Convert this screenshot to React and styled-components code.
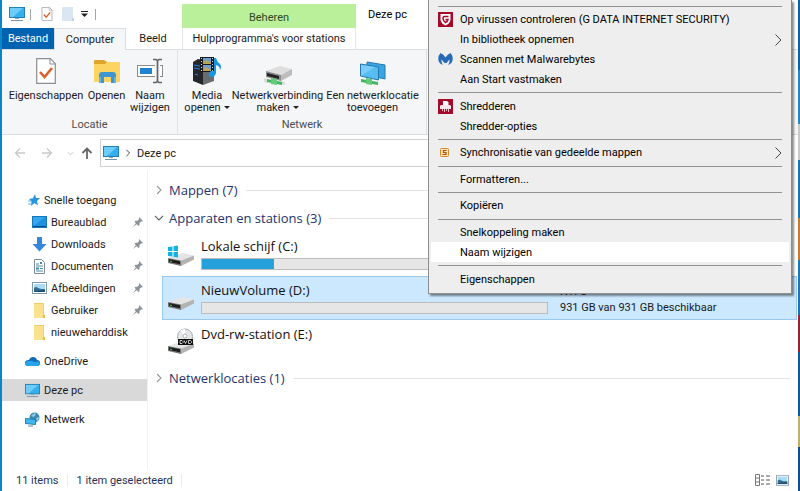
import React from "react";
import styled, { createGlobalStyle } from "styled-components";

const GlobalStyle = createGlobalStyle`
  * {
    box-sizing: border-box;
  }

  body {
    margin: 0;
    overflow: hidden;
    font-family: Roboto, "Open Sans", sans-serif;
    font-size: 11px;
    line-height: 13px;
    color: #1a1a1a;
  }

  button {
    font: inherit;
    color: inherit;
    background: none;
    border: 0;
    padding: 0;
    margin: 0;
  }

  svg {
    display: block;
    flex: none;
  }
`;

const Desktop = styled.div`
  position: relative;
  height: 100vh;
  padding-right: 2px;
  border-left: 2px solid #0787c9;
  background: linear-gradient(
    to bottom,
    #0d62a8 0 70px,
    #2487c4 70px 124px,
    #c9c9c9 124px 160px,
    #1673b8 160px 218px,
    #c57b32 218px 260px,
    #1c75b5 260px 315px,
    #96252a 315px 352px,
    #0e599c 352px 416px,
    #bfae6c 416px 447px,
    #0e4f93 447px
  );
`;

const Window = styled.div`
  height: 100%;
  display: flex;
  flex-direction: column;
  background: #fff;
`;

/* title bar and tabs */

const Header = styled.header`
  display: grid;
  grid-template-columns: 180px 174px 1fr;
  grid-template-rows: 28px 21px;
  border-bottom: 1px solid #dcddde;
`;

const QuickAccess = styled.div`
  display: flex;
  align-items: center;
  padding-left: 7px;
`;

const QuickButton = styled.button`
  display: flex;
  justify-content: center;
  width: ${(props) => props.$width || 21}px;
`;

const QuickDivider = styled.span`
  width: 1px;
  height: 11px;
  margin: 0 5px;
  background: #a5a5a5;
`;

const ContextTitle = styled.div`
  margin-top: 4px;
  padding-top: 7px;
  text-align: center;
  background: #bbf09a;
  color: #2c4a22;
`;

const WindowTitle = styled.div`
  padding: 8px 12px;
  color: #000;
`;

const TabList = styled.div`
  display: flex;
`;

const Tab = styled.button`
  width: ${(props) => props.$width}px;
  height: 21px;
  text-align: center;
`;

const FileTab = styled(Tab)`
  color: #fff;
  background: #0063b1;
`;

const ActiveTab = styled(Tab)`
  height: 22px;
  background: #f5f6f7;
  border: 1px solid #dcddde;
  border-bottom: 0;
`;

const ToolTab = styled(Tab)`
  width: 100%;
  border: 1px solid #e6e6e6;
  border-width: 0 1px;
`;

/* ribbon */

const Ribbon = styled.section`
  display: flex;
  height: 85px;
  line-height: 12px;
  background: #f5f6f7;
  border-bottom: 1px solid #dadbdc;
`;

const RibbonGroup = styled.div`
  display: flex;
  flex-direction: column;
  justify-content: space-between;
  padding: 7px 5px 3px;
  border-right: 1px solid #e1e2e3;
`;

const RibbonButtons = styled.div`
  display: flex;
`;

const RibbonButton = styled.button`
  width: ${(props) => props.$width}px;
  display: flex;
  flex-direction: column;
  align-items: center;
  gap: 5px;
  white-space: nowrap;
`;

const RibbonIcon = styled.span`
  display: flex;
  align-items: center;
  height: 28px;
`;

const GroupLabel = styled.div`
  text-align: center;
  color: #4d4d4d;
`;

const Caret = styled.span`
  display: inline-block;
  margin-left: 3px;
  vertical-align: 2px;
  border: 3px solid transparent;
  border-top-color: #222;
  border-bottom: 0;
`;

/* address bar */

const AddressBar = styled.div`
  display: flex;
  align-items: center;
  height: 36px;
  padding: 0 8px 0 11px;
`;

const NavButton = styled.button`
  width: ${(props) => props.$width || 27}px;
  display: flex;
  justify-content: center;
`;

const Address = styled.div`
  flex: 1;
  display: flex;
  align-items: center;
  gap: 5px;
  height: 28px;
  padding-left: 2px;
  border: 1px solid #d0d0d0;
`;

/* body */

const Body = styled.div`
  flex: 1;
  display: flex;
  min-height: 0;
`;

const Sidebar = styled.nav`
  width: 146px;
  padding-top: 18px;
  border-right: 1px solid #f1f1f1;
`;

const NavGroup = styled.div`
  margin-bottom: 7px;
`;

const NavItem = styled.a`
  display: flex;
  align-items: center;
  gap: 4px;
  height: 22px;
  padding-left: ${(props) => (props.$nested ? 30 : 23)}px;
  padding-right: 4px;
  color: inherit;
  text-decoration: none;
  background: ${(props) => (props.$active ? "#d9d9d9" : "none")};

  span {
    flex: 1;
    white-space: nowrap;
  }
`;

const Content = styled.main`
  flex: 1;
  padding: 5px 8px 0 6px;
`;

const SectionHead = styled.h2`
  display: flex;
  align-items: center;
  gap: 5px;
  height: 28px;
  margin: 0;
  font-family: "Open Sans", sans-serif;
  font-size: 13px;
  line-height: 18px;
  font-weight: 400;
  color: #24336e;

  &::after {
    content: "";
    flex: 1;
    height: 1px;
    margin-left: 3px;
    background: #e3e3e3;
  }
`;

const Drives = styled.div`
  margin: 0 -7px 0 8px;
`;

const Drive = styled.div`
  display: grid;
  grid-template-columns: 26px 347px 1fr;
  column-gap: 7px;
  height: 44px;
  padding: 4px 5px 0;
  border: 1px solid ${(props) => (props.$selected ? "#99c9ef" : "transparent")};
  background: ${(props) => (props.$selected ? "#cce8ff" : "none")};
`;

const DriveIcon = styled.div`
  padding-top: 2px;
`;

const DriveName = styled.div`
  font-family: "Open Sans", sans-serif;
  font-size: 13px;
  line-height: 18px;
  color: #111;
`;

const Usage = styled.div`
  height: 12px;
  margin-top: 3px;
  background: #e6e6e6;
  border: 1px solid #bcbcbc;
`;

const UsageFill = styled.div`
  height: 100%;
  background: #26a0da;
`;

const DriveInfo = styled.div`
  padding: 3px 0 0 5px;
  line-height: 16px;
`;

const StatusBar = styled.footer`
  display: flex;
  align-items: center;
  gap: 9px;
  height: 22px;
  padding: 0 9px 0 14px;
  color: #1f3358;
`;

const StatusText = styled.span`
  padding-right: 8px;
  border-right: 1px solid #ededed;
`;

const ViewButtons = styled.div`
  display: flex;
  gap: 6px;
  margin-left: auto;
`;

/* context menu */

const Menu = styled.ul`
  position: absolute;
  top: 0;
  right: 8px;
  left: 426px;
  display: flex;
  flex-direction: column;
  height: 294px;
  margin: 0;
  padding: 3px 2px 4px;
  list-style: none;
  background: #eee;
  border: 1px solid #8e8e8e;
  border-top: 0;
  box-shadow: 2px 2px 2px rgba(0, 0, 0, 0.45);
`;

const MenuItem = styled.button`
  display: grid;
  grid-template-columns: 22px 1fr auto;
  align-items: center;
  width: 100%;
  height: 20px;
  padding: 0 7px;
  text-align: left;
  color: #000;
  background: ${(props) => (props.$hover ? "#fff" : "none")};
`;

const Separator = styled.li`
  flex: 1;
  display: flex;
  align-items: center;
  margin: 0 7px;

  &::after {
    content: "";
    flex: 1;
    height: 1px;
    background: #919191;
  }
`;

function PcIcon({ size = 16 }) {
  return (
    <svg width={size} height={size} viewBox="0 0 16 16">
      <rect x="0.5" y="1.5" width="15" height="10" fill="#35b0ee" stroke="#2380b8" />
      <path d="M1 2h13L4 11H1z" fill="#6dcdf8" />
      <path d="M6 12h4v1H6z" fill="#8fa7b5" />
      <path d="M2 14h12v1H2z" fill="#7893a5" />
    </svg>
  );
}

function CheckDoc({ width, height }) {
  return (
    <svg width={width} height={height} viewBox="0 0 20 26">
      <path d="M.7.7h13.6l5 5v19.6H.7z" fill="#fff" stroke="#8d8d8d" strokeWidth="1.2" />
      <path d="M14 1v5h5" fill="none" stroke="#8d8d8d" />
      <path d="M4 14l4.500 5L16 10" fill="none" stroke="#d9622b" strokeWidth="2.600" />
    </svg>
  );
}

function OpenFolderIcon() {
  return (
    <svg width="26" height="26" viewBox="0 0 26 26">
      <path d="M0 3q0-1 1-1h9l3 2h12q1 0 1 1v18H0z" fill="#e2a32a" />
      <path d="M0 6h11l2-2h13v20H0z" fill="#fcd462" />
      <path d="M5 25v-8q0-3 3-3h11q3 0 3 3v8h-5v-6h-7v6z" fill="#3f96cf" />
      <path d="M5 25v-6h2v6zM20 25v-6h2v6z" fill="#60b5e4" />
    </svg>
  );
}

function RenameIcon() {
  return (
    <svg width="26" height="26" viewBox="0 0 26 26">
      <rect x="0.5" y="7.5" width="25" height="11" fill="#fff" stroke="#8b8b8b" />
      <path d="M3 10h12v6H3z" fill="#1e83d3" />
      <path d="M20.500 3v20" stroke="#f5f6f7" strokeWidth="5" />
      <path d="M16 1.500h3l1.500 1 1.500-1h3M20.500 2v22M16 24.500h3l1.500-1 1.500 1h3" fill="none" stroke="#666" strokeWidth="1.700" />
    </svg>
  );
}

function MediaIcon() {
  return (
    <svg width="30" height="28" viewBox="0 0 30 28">
      <path d="M1 5l5-3 10 2v20l-5 4L1 24z" fill="#23272b" />
      <path d="M11 9l11-1v16l-11 4z" fill="#686d71" />
      <path d="M2 8l8 1.500M2 11l8 1.500M3 17l3 1" stroke="#2f7de0" strokeWidth="1.200" />
      <path d="M8 0h14v15H8z" fill="#17191c" />
      <path d="M11 1h8v6h-8zM11 8h8v6h-8z" fill="#6f9ecb" />
      <path d="M11 5l4-2 4 3v1h-8zM11 12l3-2 5 3v1h-8z" fill="#b8a557" />
      <path d="M9.500 1v13M20.500 1v13" stroke="#ddd" strokeDasharray="1 2" />
      <path d="M22 1h2q1 4 4 6 2 3 0 6 0-4-4-5v8q-1 4-5 4-3-1-2-4 2-3 5-2z" fill="#1696e5" />
    </svg>
  );
}

function NetDriveIcon() {
  return (
    <svg width="30" height="28" viewBox="0 0 30 28">
      <path d="M3 14L17 9l12 3-11 6z" fill="#dedede" />
      <path d="M3 14l15 4v6L3 20z" fill="#8d8d8d" />
      <path d="M18 18l11-6v6l-11 6z" fill="#bdbdbd" />
      <path d="M4 16l12 3v3L4 19z" fill="#222" />
      <path d="M1 21l4 1v4l-4-1zM18 24l4 1v3l-4-1z" fill="#d8dedb" />
      <path d="M4 22l15 3v3L4 25z" fill="#41b65d" />
      <path d="M8 21l6 1v6l-6-1z" fill="#63cb7a" />
    </svg>
  );
}

function NetPlaceIcon() {
  return (
    <svg width="28" height="28" viewBox="0 0 28 28">
      <path d="M8 5l18 3v14L8 18z" fill="#39a6e4" stroke="#2676ab" />
      <path d="M1.500 7l18 3v13l-18-4z" fill="#55bdf2" stroke="#2676ab" />
      <path d="M2 8l14 2L2 19z" fill="#7bcdf7" />
      <path d="M2 22l17 3v3L2 25z" fill="#42b55e" />
      <path d="M7 21l6 1v6l-6-1z" fill="#62ca79" />
    </svg>
  );
}

function Chevron({ dir = "right", size = 10, color = "#666" }) {
  return (
    <svg width={size} height={size} viewBox="0 0 10 10" fill="none" stroke={color} strokeWidth="1.1">
      {dir === "right" ? <path d="M3 1l4 4-4 4" /> : <path d="M1 3l4 4 4-4" />}
    </svg>
  );
}

function SubmenuArrow() {
  return (
    <svg width="7" height="12" viewBox="0 0 7 12" fill="none" stroke="#444">
      <path d="M.5.500L6 6 .5 11.500" />
    </svg>
  );
}

function Arrow({ dir, color = "#c9c9c9" }) {
  const paths = {
    left: "M11 6H1.500M6 1.500L1.500 6 6 10.500",
    right: "M1 6h9.500M6 1.500L10.500 6 6 10.500",
    up: "M6 12V1.500M1.500 6L6 1.500 10.500 6",
  };
  return (
    <svg width="12" height="12" viewBox="0 0 12 12" fill="none" stroke={color} strokeWidth={dir === "up" ? 1.8 : 1.3}>
      <path d={paths[dir]} />
    </svg>
  );
}

function Pin() {
  return (
    <svg width="10" height="10" viewBox="0 0 10 10">
      <path d="M6 0l4 4-1 .5-.6-.3L6.500 6l0 2-1 1L1.500 4.800l1-1 2 0L6.200 2l-.4-1zM3 6l1 1-4 3z" fill="#8c9299" />
    </svg>
  );
}

function StarIcon() {
  return (
    <svg width="15" height="12" viewBox="-3 0 15 12">
      <path d="M7 0l1 4 4 0-3 3 1 4.500L6.500 9 3 12l.5-4.500L1 5l4-.7z" fill="#2794df" />
      <path d="M0 7h3M0 10h3" stroke="#63b4e8" />
    </svg>
  );
}

function DesktopIcon() {
  return (
    <svg width="15" height="12" viewBox="0 0 15 12">
      <rect x=".5" y=".5" width="14" height="11" fill="#1e90e0" stroke="#1477bd" />
      <path d="M1 1h12L3 9H1z" fill="#35a6f0" />
      <path d="M1 10h13v1H1z" fill="#0b4f82" />
    </svg>
  );
}

function DownloadIcon() {
  return (
    <svg width="15" height="15" viewBox="0 0 15 15">
      <path d="M5 0h5v7h4.500L7.500 14.500.5 7H5z" fill="#3487dc" />
    </svg>
  );
}

function DocumentIcon() {
  return (
    <svg width="15" height="15" viewBox="0 0 15 15">
      <path d="M2.500.5h7l3 3v11h-10z" fill="#fff" stroke="#7d8d99" />
      <path d="M4 5h3M4 7h7M4 12h7" stroke="#5386a7" />
      <path d="M4 8.500h3v2H4zM8 9h3v1H8zM8 3h2v2H8z" fill="#3e88b4" />
    </svg>
  );
}

function PictureIcon({ width = 15, height = 12 }) {
  return (
    <svg width={width} height={height} viewBox="0 0 15 12">
      <rect x=".5" y=".5" width="14" height="11" fill="#fff" stroke="#8298a6" />
      <path d="M2 2h11v8H2z" fill="#a9d9f4" />
      <path d="M2 6q2-2 4 0l3 1 4 0v3H2z" fill="#346f91" />
      <path d="M2 9l11-1v2H2z" fill="#1d4f77" />
    </svg>
  );
}

function FolderIcon() {
  return (
    <svg width="15" height="15" viewBox="0 0 15 15">
      <path d="M2 0h10v13h1v2H2z" fill="#f1cd67" />
      <path d="M2 1h9v14H2z" fill="#fbe28e" />
      <path d="M11 12h2v3h-2z" fill="#e6bb4a" />
    </svg>
  );
}

function CloudIcon() {
  return (
    <svg width="15" height="15" viewBox="0 0 15 15">
      <path d="M4 12q-4 0-4-3t4-3q1-3 4-3t4 3q3 0 3 3t-3 3z" fill="#0f6cbd" />
      <path d="M3 12q-3 0-3-2.500T4 7q2-1 5 1l4-.5q2 1 2 2.500-1 2-3 2z" fill="#29a2ec" />
    </svg>
  );
}

function NetworkIcon() {
  return (
    <svg width="15" height="15" viewBox="0 0 15 15">
      <circle cx="9.5" cy="5.5" r="5" fill="#3c87ad" />
      <path d="M6 4q3-4 5-2l-2 3zM11 6l3-1q0 3-2 4z" fill="#8bcce2" />
      <path d="M.5 6.500l10 1v5l-10-1z" fill="#42b8f1" stroke="#247daf" />
      <path d="M3 14h5" stroke="#68889a" />
    </svg>
  );
}

function DiskIcon({ kind }) {
  return (
    <svg width="26" height="30" viewBox="0 0 26 30">
      <path d="M0 19l15-5 11 2.500-13 5z" fill="#e4e4e4" />
      <path d="M0 19l13 2.500V27L0 24z" fill="#777" />
      <path d="M13 21.500l13-5v4L13 27z" fill="#b3b3b3" />
      <path d="M1 20l11 2.300v3L1 23z" fill="#1d1d1d" />
      <path d="M2 22l2 .5" stroke="#4fbf5a" />
      {kind === "windows" && (
        <path d="M0 8l4.500-.6v4.600H0zM5.500 7.200l4.500-.7V12H5.500zM0 13h4.500v4.600L0 17zM5.500 13H10v5.500l-4.500-.7z" fill="#10b3e2" />
      )}
      {kind === "dvd" && (
        <g>
          <circle cx="17" cy="9.5" r="7.5" fill="#e5e8e8" stroke="#a3aaaa" />
          <path d="M17 9L12 4a7 7 0 0 1 5-2z" fill="#fff" />
          <circle cx="17" cy="9" r="2" fill="#fff" stroke="#b5b5b5" />
          <path d="M10 12h15v6H10z" fill="#111" />
          <path d="M12 13.500v3h2l1-1v-1l-1-1zM16 13.500l1.500 3 1.500-3M20.500 13.500v3h2l1-1v-1l-1-1z" fill="none" stroke="#eee" strokeWidth=".8" />
        </g>
      )}
    </svg>
  );
}

function ShieldIcon() {
  return (
    <svg width="15" height="15" viewBox="0 0 15 15">
      <path d="M0 0h15v15H0z" fill="#a60a2b" />
      <path d="M2.500 2h10v6q-1 4-5 5.500-4-1.500-5-5.500z" fill="#fff" />
      <path d="M10.500 4.500H6.500q-1.500 0-1.500 2 0 2 2.500 4 2-1 2.500-3H7.500" fill="none" stroke="#a60a2b" strokeWidth="1.500" />
    </svg>
  );
}

function MalwareIcon() {
  return (
    <svg width="15" height="15" viewBox="0 0 15 15">
      <path d="M2.500 1Q5.500 2 7.500 5.500 9.500 2 12.500 1 16 5 14 10q-1 2-4 3 2-3 1.500-5.500L8.500 11h-2L3.500 7.500Q3 10 5 13 2 12 1 10-1 5 2.500 1z" fill="#2669b5" />
    </svg>
  );
}

function ShredIcon() {
  return (
    <svg width="15" height="15" viewBox="0 0 15 15">
      <path d="M0 0h15v15H0z" fill="#a60a2b" />
      <path d="M5 2h4l1.500 1.500V7H5z" fill="#fff" />
      <path d="M3 6h9l1 1v3H2V7z" fill="#f7e7ea" />
      <path d="M4.500 10v2M6.500 10v3M8.500 10v2M10.500 10v3" stroke="#e9b9c2" />
    </svg>
  );
}

function SyncIcon() {
  return (
    <svg width="15" height="15" viewBox="0 0 15 15">
      <rect x="2.5" y="3.5" width="8" height="8" rx="1" fill="#fbe0b0" stroke="#d58a32" />
      <path d="M8.500 5.500H5.500v2H8v2H4.500" fill="none" stroke="#a8541a" strokeWidth="1.200" />
    </svg>
  );
}

const quickItems = [
  { icon: <DesktopIcon />, label: "Bureaublad" },
  { icon: <DownloadIcon />, label: "Downloads" },
  { icon: <DocumentIcon />, label: "Documenten" },
  { icon: <PictureIcon />, label: "Afbeeldingen" },
  { icon: <FolderIcon />, label: "Gebruiker" },
  { icon: <FolderIcon />, label: "nieuweharddisk", unpinned: true },
];

const drives = [
  { name: "Lokale schijf (C:)", kind: "windows", used: 21 },
  {
    name: "NieuwVolume (D:)",
    used: 0,
    selected: true,
    system: "NTFS",
    space: "931 GB van 931 GB beschikbaar",
  },
  { name: "Dvd-rw-station (E:)", kind: "dvd" },
];

const menuItems = [
  null,
  { label: "Op virussen controleren (G DATA INTERNET SECURITY)", icon: <ShieldIcon /> },
  { label: "In bibliotheek opnemen", more: true },
  { label: "Scannen met Malwarebytes", icon: <MalwareIcon /> },
  { label: "Aan Start vastmaken" },
  null,
  { label: "Shredderen", icon: <ShredIcon /> },
  { label: "Shredder-opties" },
  null,
  { label: "Synchronisatie van gedeelde mappen", icon: <SyncIcon />, more: true },
  null,
  { label: "Formatteren..." },
  null,
  { label: "Kopiëren" },
  null,
  { label: "Snelkoppeling maken" },
  { label: "Naam wijzigen", hover: true },
  null,
  { label: "Eigenschappen" },
];

function ContextMenu() {
  return (
    <Menu role="menu">
      {menuItems.map((item, i) =>
        item ? (
          <li key={i} role="none">
            <MenuItem role="menuitem" $hover={item.hover}>
              <span>{item.icon}</span>
              <span>{item.label}</span>
              {item.more && <SubmenuArrow />}
            </MenuItem>
          </li>
        ) : (
          <Separator key={i} role="separator" />
        )
      )}
    </Menu>
  );
}

function App() {
  return (
    <Desktop>
      <GlobalStyle />
      <Window>
        <Header>
          <QuickAccess>
            <PcIcon />
            <QuickDivider />
            <QuickButton aria-label="Eigenschappen">
              <CheckDoc width={12} height={14} />
            </QuickButton>
            <QuickButton aria-label="Nieuwe map">
              <svg width="12" height="14" viewBox="0 0 12 14">
                <path d="M0 0h11v11h1v3H0z" fill="#dbe6f4" />
                <path d="M10 11h2v3h-2z" fill="#c3d2e6" />
              </svg>
            </QuickButton>
            <QuickButton aria-label="Aanpassen" $width={12}>
              <svg width="7" height="6" viewBox="0 0 7 6">
                <path d="M0 0h7v1H0zM0 2.500h7L3.500 6z" fill="#222" />
              </svg>
            </QuickButton>
            <QuickDivider />
          </QuickAccess>
          <ContextTitle>Beheren</ContextTitle>
          <WindowTitle>Deze pc</WindowTitle>
          <TabList>
            <FileTab $width={52}>Bestand</FileTab>
            <ActiveTab $width={72}>Computer</ActiveTab>
            <Tab $width={54}>Beeld</Tab>
          </TabList>
          <ToolTab>Hulpprogramma's voor stations</ToolTab>
        </Header>

        <Ribbon>
          <RibbonGroup>
            <RibbonButtons>
              <RibbonButton $width={78}>
                <RibbonIcon>
                  <CheckDoc width={26} height={26} />
                </RibbonIcon>
                Eigenschappen
              </RibbonButton>
              <RibbonButton $width={43}>
                <RibbonIcon>
                  <OpenFolderIcon />
                </RibbonIcon>
                Openen
              </RibbonButton>
              <RibbonButton $width={44}>
                <RibbonIcon>
                  <RenameIcon />
                </RibbonIcon>
                <span>
                  Naam
                  <br />
                  wijzigen
                </span>
              </RibbonButton>
            </RibbonButtons>
            <GroupLabel>Locatie</GroupLabel>
          </RibbonGroup>
          <RibbonGroup>
            <RibbonButtons>
              <RibbonButton $width={48}>
                <RibbonIcon>
                  <MediaIcon />
                </RibbonIcon>
                <span>
                  Media
                  <br />
                  openen
                  <Caret />
                </span>
              </RibbonButton>
              <RibbonButton $width={93}>
                <RibbonIcon>
                  <NetDriveIcon />
                </RibbonIcon>
                <span>
                  Netwerkverbinding
                  <br />
                  maken
                  <Caret />
                </span>
              </RibbonButton>
              <RibbonButton $width={97}>
                <RibbonIcon>
                  <NetPlaceIcon />
                </RibbonIcon>
                <span>
                  Een netwerklocatie
                  <br />
                  toevoegen
                </span>
              </RibbonButton>
            </RibbonButtons>
            <GroupLabel>Netwerk</GroupLabel>
          </RibbonGroup>
        </Ribbon>

        <AddressBar>
          <NavButton aria-label="Vorige" $width={14}>
            <Arrow dir="left" />
          </NavButton>
          <NavButton aria-label="Volgende" $width={40}>
            <Arrow dir="right" />
          </NavButton>
          <NavButton aria-label="Recente locaties" $width={6}>
            <Chevron dir="down" size={7} color="#bbb" />
          </NavButton>
          <NavButton aria-label="Omhoog">
            <Arrow dir="up" color="#666" />
          </NavButton>
          <Address>
            <PcIcon />
            <Chevron size={8} color="#333" />
            <span>Deze pc</span>
          </Address>
        </AddressBar>

        <Body>
          <Sidebar>
            <NavGroup>
              <NavItem href="#snel">
                <StarIcon />
                <span>Snelle toegang</span>
              </NavItem>
              {quickItems.map((item) => (
                <NavItem key={item.label} href={"#" + item.label} $nested>
                  {item.icon}
                  <span>{item.label}</span>
                  {!item.unpinned && <Pin />}
                </NavItem>
              ))}
            </NavGroup>
            <NavGroup>
              <NavItem href="#onedrive">
                <CloudIcon />
                <span>OneDrive</span>
              </NavItem>
            </NavGroup>
            <NavGroup>
              <NavItem href="#pc" $active>
                <PcIcon size={15} />
                <span>Deze pc</span>
              </NavItem>
            </NavGroup>
            <NavGroup>
              <NavItem href="#netwerk">
                <NetworkIcon />
                <span>Netwerk</span>
              </NavItem>
            </NavGroup>
          </Sidebar>

          <Content>
            <SectionHead>
              <Chevron color="#999" />
              Mappen (7)
            </SectionHead>
            <SectionHead>
              <Chevron dir="down" />
              Apparaten en stations (3)
            </SectionHead>
            <Drives>
              {drives.map((drive) => (
                <Drive key={drive.name} $selected={drive.selected}>
                  <DriveIcon>
                    <DiskIcon kind={drive.kind} />
                  </DriveIcon>
                  <div>
                    <DriveName>{drive.name}</DriveName>
                    {drive.used !== undefined && (
                      <Usage>
                        <UsageFill style={{ width: `${drive.used}%` }} />
                      </Usage>
                    )}
                  </div>
                  <DriveInfo>
                    <div>{drive.system}</div>
                    <div>{drive.space}</div>
                  </DriveInfo>
                </Drive>
              ))}
            </Drives>
            <SectionHead>
              <Chevron color="#999" />
              Netwerklocaties (1)
            </SectionHead>
          </Content>
        </Body>

        <StatusBar>
          <StatusText>11 items</StatusText>
          <StatusText>1 item geselecteerd</StatusText>
          <ViewButtons>
            <button aria-label="Details">
              <svg width="15" height="12" viewBox="0 0 15 12" fill="none" stroke="#777">
                <path d="M.5.5h4v11h-4zM.5 4h4M.5 8h4" />
                <path d="M6 2h3M11 2h4M6 6h3M11 6h4M6 10h3M11 10h4" stroke="#555" />
              </svg>
            </button>
            <button aria-label="Grote pictogrammen">
              <PictureIcon width={13} height={11} />
            </button>
          </ViewButtons>
        </StatusBar>
      </Window>
      <ContextMenu />
    </Desktop>
  );
}

export default App;
